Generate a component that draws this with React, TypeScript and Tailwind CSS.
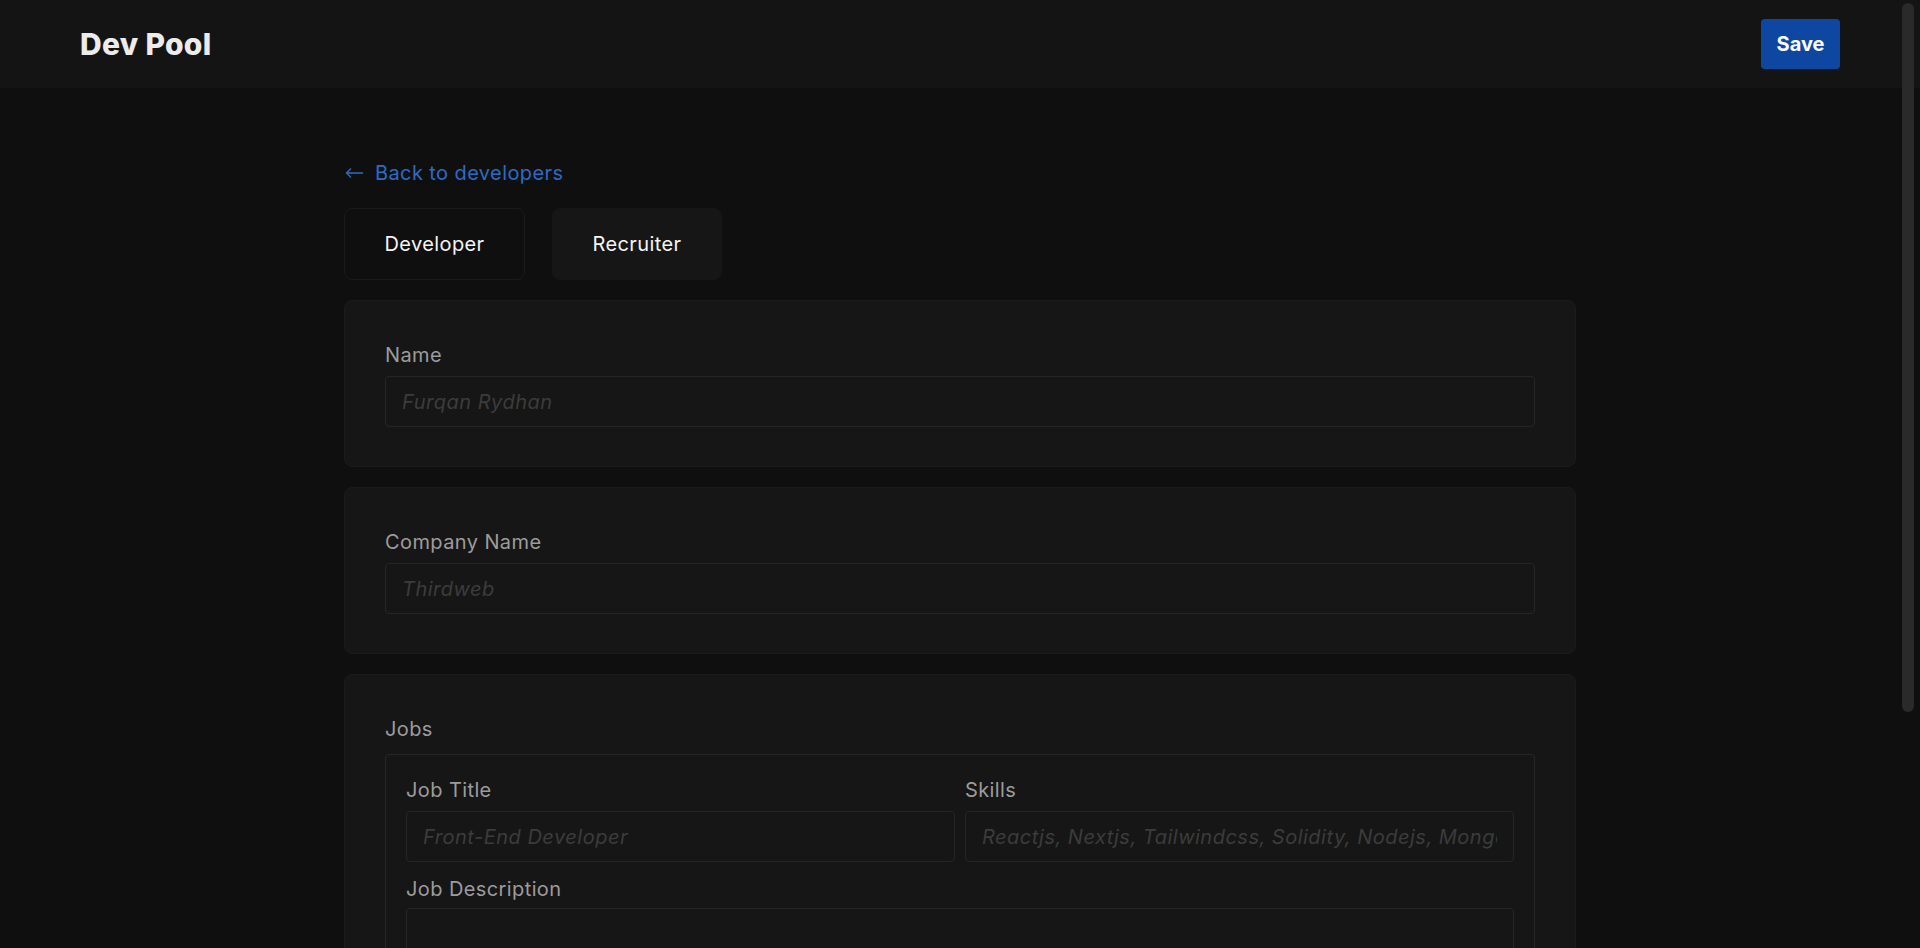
import React from 'react';

const Field: React.FC<{ label: string; placeholder: string }> = ({ label, placeholder }) => (
  <div className="flex flex-col">
    <label className="text-[20px] leading-[30px] text-[#9c9c9c] mb-1.5">{label}</label>
    <input
      placeholder={placeholder}
      className="h-[51px] w-full rounded border border-[#262626] bg-[#161616] px-4 text-[20px] tracking-[0.025em] text-[#ddd] placeholder:italic placeholder:text-[#3c3c3c] outline-none"
    />
  </div>
);

const App: React.FC = () => {
  return (
    <div className="relative h-screen overflow-hidden bg-[#0f0f0f] font-['Inter',sans-serif] tracking-[0.025em]">
      {/* header */}
      <header className="flex h-[88px] items-center justify-between bg-[#141414] px-20">
        <h1 className="text-[30px] font-extrabold tracking-[0.01em] text-[#ececec]">Dev Pool</h1>
        <button className="h-[50px] w-[79px] rounded bg-[#0d47a1] text-[20px] font-bold tracking-normal text-white">Save</button>
      </header>

      <main className="mx-auto w-[1232px] pt-[70px]">
        <a href="#" className="mb-5 flex items-center gap-[11px] text-[20px] leading-[30px] text-[#2b6bc6]">
          <svg width="19" height="12" viewBox="0 0 19 12" fill="none" stroke="currentColor" strokeWidth="1.4" className="ml-px">
            <path d="M18 6H1.5M6 1.5L1.5 6L6 10.5" />
          </svg>
          <span>Back to developers</span>
        </a>

        <div className="mb-5 flex gap-[27px]">
          <button className="h-[72px] w-[181px] rounded-lg border border-[#1a1a1a] bg-[#0f0f0f] text-[20px] text-[#f5f5f5]">
            Developer
          </button>
          <button className="h-[72px] w-[170px] rounded-lg border border-[#161616] bg-[#161616] text-[20px] text-[#f5f5f5]">
            Recruiter
          </button>
        </div>

        <div className="flex flex-col gap-5">
          <section className="rounded-lg border border-[#1b1b1b] bg-[#161616] px-10 py-[39px]">
            <Field label="Name" placeholder="Furqan Rydhan" />
          </section>

          <section className="rounded-lg border border-[#1b1b1b] bg-[#161616] px-10 py-[39px]">
            <Field label="Company Name" placeholder="Thirdweb" />
          </section>

          <section className="rounded-lg border border-[#1b1b1b] bg-[#161616] px-10 py-[39px]">
            <div className="mb-2.5 text-[20px] leading-[30px] text-[#9c9c9c]">Jobs</div>
            <div className="rounded border border-[#262626] p-5">
              <div className="grid grid-cols-2 gap-x-2.5">
                <Field label="Job Title" placeholder="Front-End Developer" />
                <Field label="Skills" placeholder="Reactjs, Nextjs, Tailwindcss, Solidity, Nodejs, Mongodb" />
              </div>
              <div className="mt-3 flex flex-col">
                <label className="mb-1 text-[20px] leading-[30px] text-[#9c9c9c]">Job Description</label>
                <textarea className="h-[140px] w-full resize-none rounded border border-[#262626] bg-[#161616] px-4 py-3 text-[20px] outline-none" />
              </div>
            </div>
          </section>
        </div>
      </main>

      {/* overlay scrollbar */}
      <div className="absolute right-0 top-0 h-full w-[22px]">
        <div className="ml-1 mt-[3px] h-[709px] w-[12px] rounded-full bg-[#2a2a2a]" />
      </div>
    </div>
  );
};

export default App;
